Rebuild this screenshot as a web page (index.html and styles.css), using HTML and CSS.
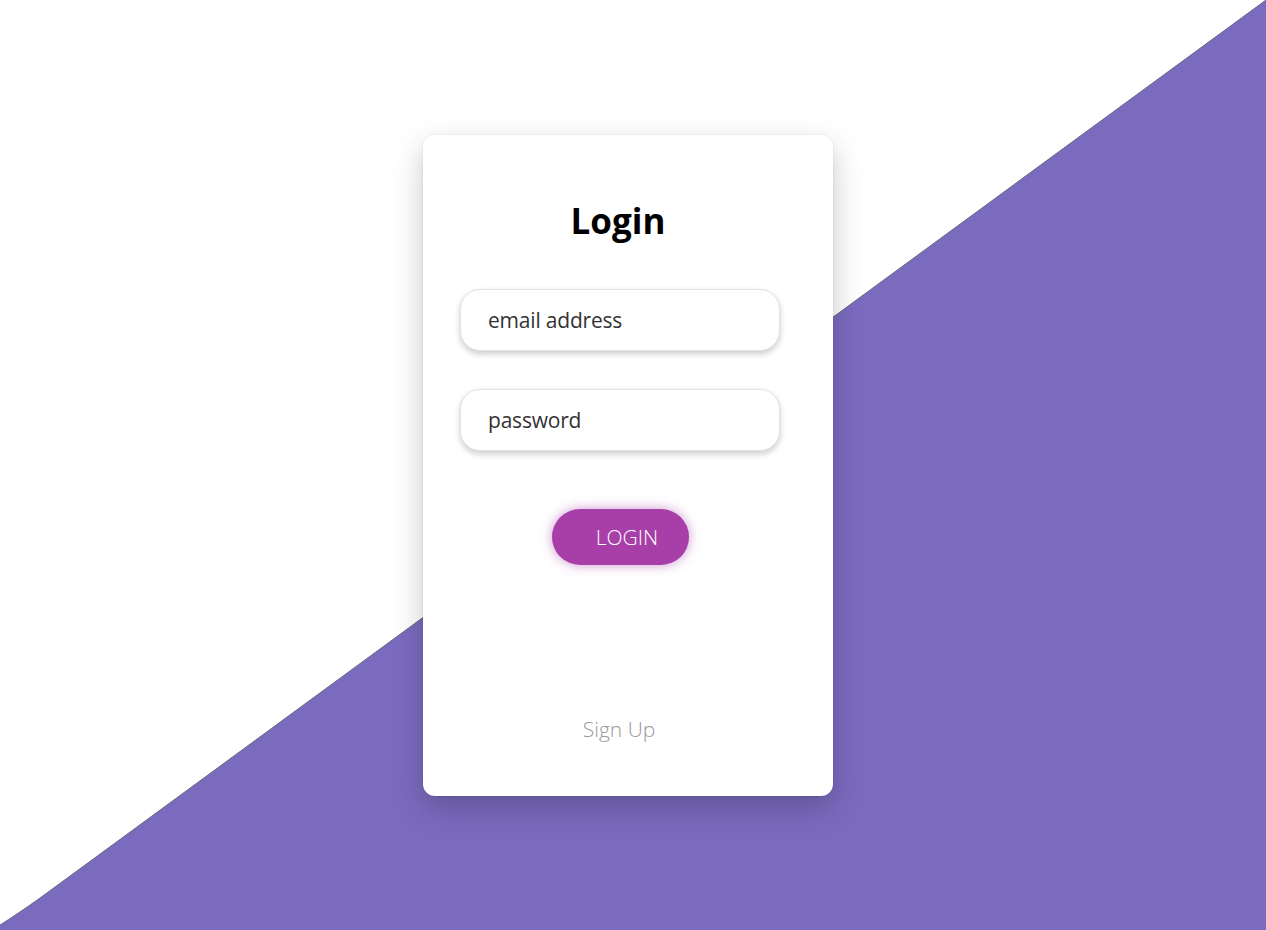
FILE: index.html
```html
<!DOCTYPE html>
<html>
<head>
<meta charset="utf-8">
<link rel="stylesheet" href="styles.css">
</head>
<body>
<svg class="bg" width="1266" height="930" viewBox="0 0 1266 930">
  <path d="M1266 0 L1266 930 L0 930 L0 925 Q16 915 40 898 Z" fill="#7b6bbf"/>
  <path d="M1266 0 L40 898 Q16 915 0 925" fill="none" stroke="#6a6a80" stroke-width="1"/>
</svg>
<main class="page">
  <div class="card">
    <h1 class="title">Login</h1>
    <div class="field">email address</div>
    <div class="field">password</div>
    <button class="btn">LOGIN</button>
    <a class="signup">Sign Up</a>
  </div>
</main>
</body>
</html>
```
FILE: styles.css
```css
html, body {
  margin: 0;
  padding: 0;
  width: 1266px;
  height: 930px;
  overflow: hidden;
  background: #ffffff;
  font-family: "Open Sans", "Noto Sans", "Liberation Sans", sans-serif;
}
.bg {
  position: absolute;
  left: 0;
  top: 0;
}
.page {
  position: relative;
  box-sizing: border-box;
  height: 930px;
  padding: 135px 0 0 423px;
}
.card {
  box-sizing: border-box;
  width: 410px;
  height: 661px;
  background: #fff;
  border-radius: 12px;
  box-shadow: 0 12px 30px rgba(0,0,0,0.22), 0 0 3px rgba(0,0,0,0.08);
  display: flex;
  flex-direction: column;
  align-items: center;
  padding: 62px 0 0 0;
}
.title {
  margin: 0 0 44px -20px;
  font-size: 35px;
  font-weight: 700;
  line-height: 48px;
  color: #000;
}
.field {
  box-sizing: border-box;
  width: 320px;
  height: 62px;
  margin: 0 0 38px -16px;
  border-radius: 20px;
  background: #fff;
  border: 1px solid #e2e2e2;
  box-shadow: 0 3px 6px rgba(0,0,0,0.2);
  padding: 0 27px;
  display: flex;
  align-items: center;
  font-size: 21px;
  font-weight: 400;
  color: #333;
  letter-spacing: -0.2px;
}
.field + .field { margin-bottom: 58px; }
.btn {
  width: 137px;
  height: 56px;
  margin-left: -16px;
  border: none;
  border-radius: 28px;
  background: #a83fa8;
  color: #fff;
  font-family: inherit;
  font-size: 21px;
  font-weight: 300;
  padding: 0 0 0 14px;
  box-shadow: 0 0 12px rgba(168,63,168,0.55);
}
.signup {
  margin: 150px 0 0 -18px;
  font-size: 21px;
  font-weight: 300;
  color: #999;
}
```
